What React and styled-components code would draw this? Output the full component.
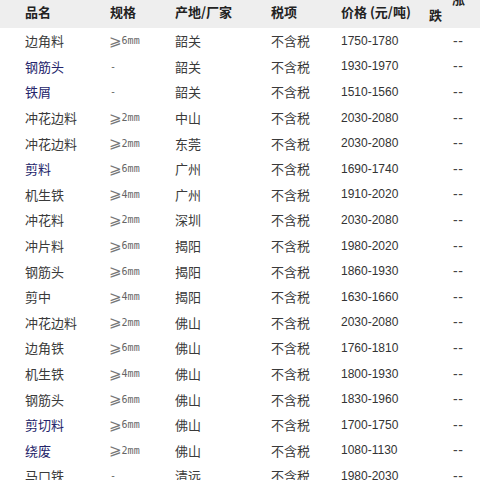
import React from "react";
import styled, { createGlobalStyle } from "styled-components";

const GlobalStyle = createGlobalStyle`
    body {
        margin: 0;
        background-color: #fff;
        font-family: "Noto Sans CJK SC", "Liberation Sans", sans-serif;
        overflow: hidden;
    }
`;

const Table = styled.div`
    width: 480px;
`;

const cols = "85px 65px 96px 70px 111px 1fr";

const HeaderRow = styled.div`
    display: grid;
    grid-template-columns: ${cols};
    padding-left: 25px;
    height: 28px;
    background-color: #eeeeee;
    align-items: center;
`;

const HeadCell = styled.div`
    font-size: 13px;
    font-weight: bold;
    color: #222;
    margin-top: -6px;
    white-space: nowrap;
`;

const UpDown = styled.div`
    display: flex;
    flex-direction: column;
    align-items: flex-start;
    font-size: 13px;
    font-weight: bold;
    color: #222;
    line-height: 16px;
`;

const Up = styled.span`
    margin-top: -14px;
`;

const Down = styled.span`
    margin-left: -23px;
`;

const Row = styled.div`
    display: grid;
    grid-template-columns: ${cols};
    padding-left: 25px;
    height: 25.6px;
    align-items: center;
`;

const Name = styled.div`
    font-size: 13px;
    color: ${(p) => (p.$link ? "#24246a" : "#3a3a3a")};
    white-space: nowrap;
`;

const Spec = styled.div`
    font-family: "DejaVu Sans Mono", "Liberation Mono", monospace;
    font-size: 10px;
    color: #666;
    white-space: nowrap;
    display: flex;
    align-items: center;
`;

const Ge = styled.span`
    font-family: "DejaVu Sans", sans-serif;
    font-size: 15px;
    color: #777;
    margin-left: -1px;
`;

const Text = styled.div`
    font-size: 13px;
    color: #3a3a3a;
    white-space: nowrap;
`;

const Price = styled.div`
    font-family: "Liberation Sans", sans-serif;
    font-size: 12px;
    color: #333;
    white-space: nowrap;
`;

const Dash = styled.div`
    font-family: "Liberation Sans", sans-serif;
    font-size: 14px;
    letter-spacing: 0.5px;
    color: #444;
    padding-left: 1px;
`;

const rows = [
    ["边角料", false, "6", "韶关", "1750-1780"],
    ["钢筋头", true, null, "韶关", "1930-1970"],
    ["铁屑", true, null, "韶关", "1510-1560"],
    ["冲花边料", false, "2", "中山", "2030-2080"],
    ["冲花边料", false, "2", "东莞", "2030-2080"],
    ["剪料", true, "6", "广州", "1690-1740"],
    ["机生铁", false, "4", "广州", "1910-2020"],
    ["冲花料", false, "2", "深圳", "2030-2080"],
    ["冲片料", false, "6", "揭阳", "1980-2020"],
    ["钢筋头", false, "6", "揭阳", "1860-1930"],
    ["剪中", false, "4", "揭阳", "1630-1660"],
    ["冲花边料", false, "2", "佛山", "2030-2080"],
    ["边角铁", false, "6", "佛山", "1760-1810"],
    ["机生铁", false, "4", "佛山", "1800-1930"],
    ["钢筋头", false, "6", "佛山", "1830-1960"],
    ["剪切料", true, "6", "佛山", "1700-1750"],
    ["绕废", true, "2", "佛山", "1080-1130"],
    ["马口铁", false, null, "清远", "1980-2030"],
];

export default function App() {
    return (
        <>
            <GlobalStyle />
            <Table>
                <HeaderRow>
                    <HeadCell>品名</HeadCell>
                    <HeadCell>规格</HeadCell>
                    <HeadCell>产地/厂家</HeadCell>
                    <HeadCell>税项</HeadCell>
                    <HeadCell>价格 (元/吨)</HeadCell>
                    <UpDown>
                        <Up>涨</Up>
                        <Down>跌</Down>
                    </UpDown>
                </HeaderRow>
                {rows.map((r, i) => (
                    <Row key={i}>
                        <Name $link={r[1]}>{r[0]}</Name>
                        <Spec>{r[2] ? <><Ge>⩾</Ge>{r[2]}mm</> : "-"}</Spec>
                        <Text>{r[3]}</Text>
                        <Text>不含税</Text>
                        <Price>{r[4]}</Price>
                        <Dash>--</Dash>
                    </Row>
                ))}
            </Table>
        </>
    );
}
